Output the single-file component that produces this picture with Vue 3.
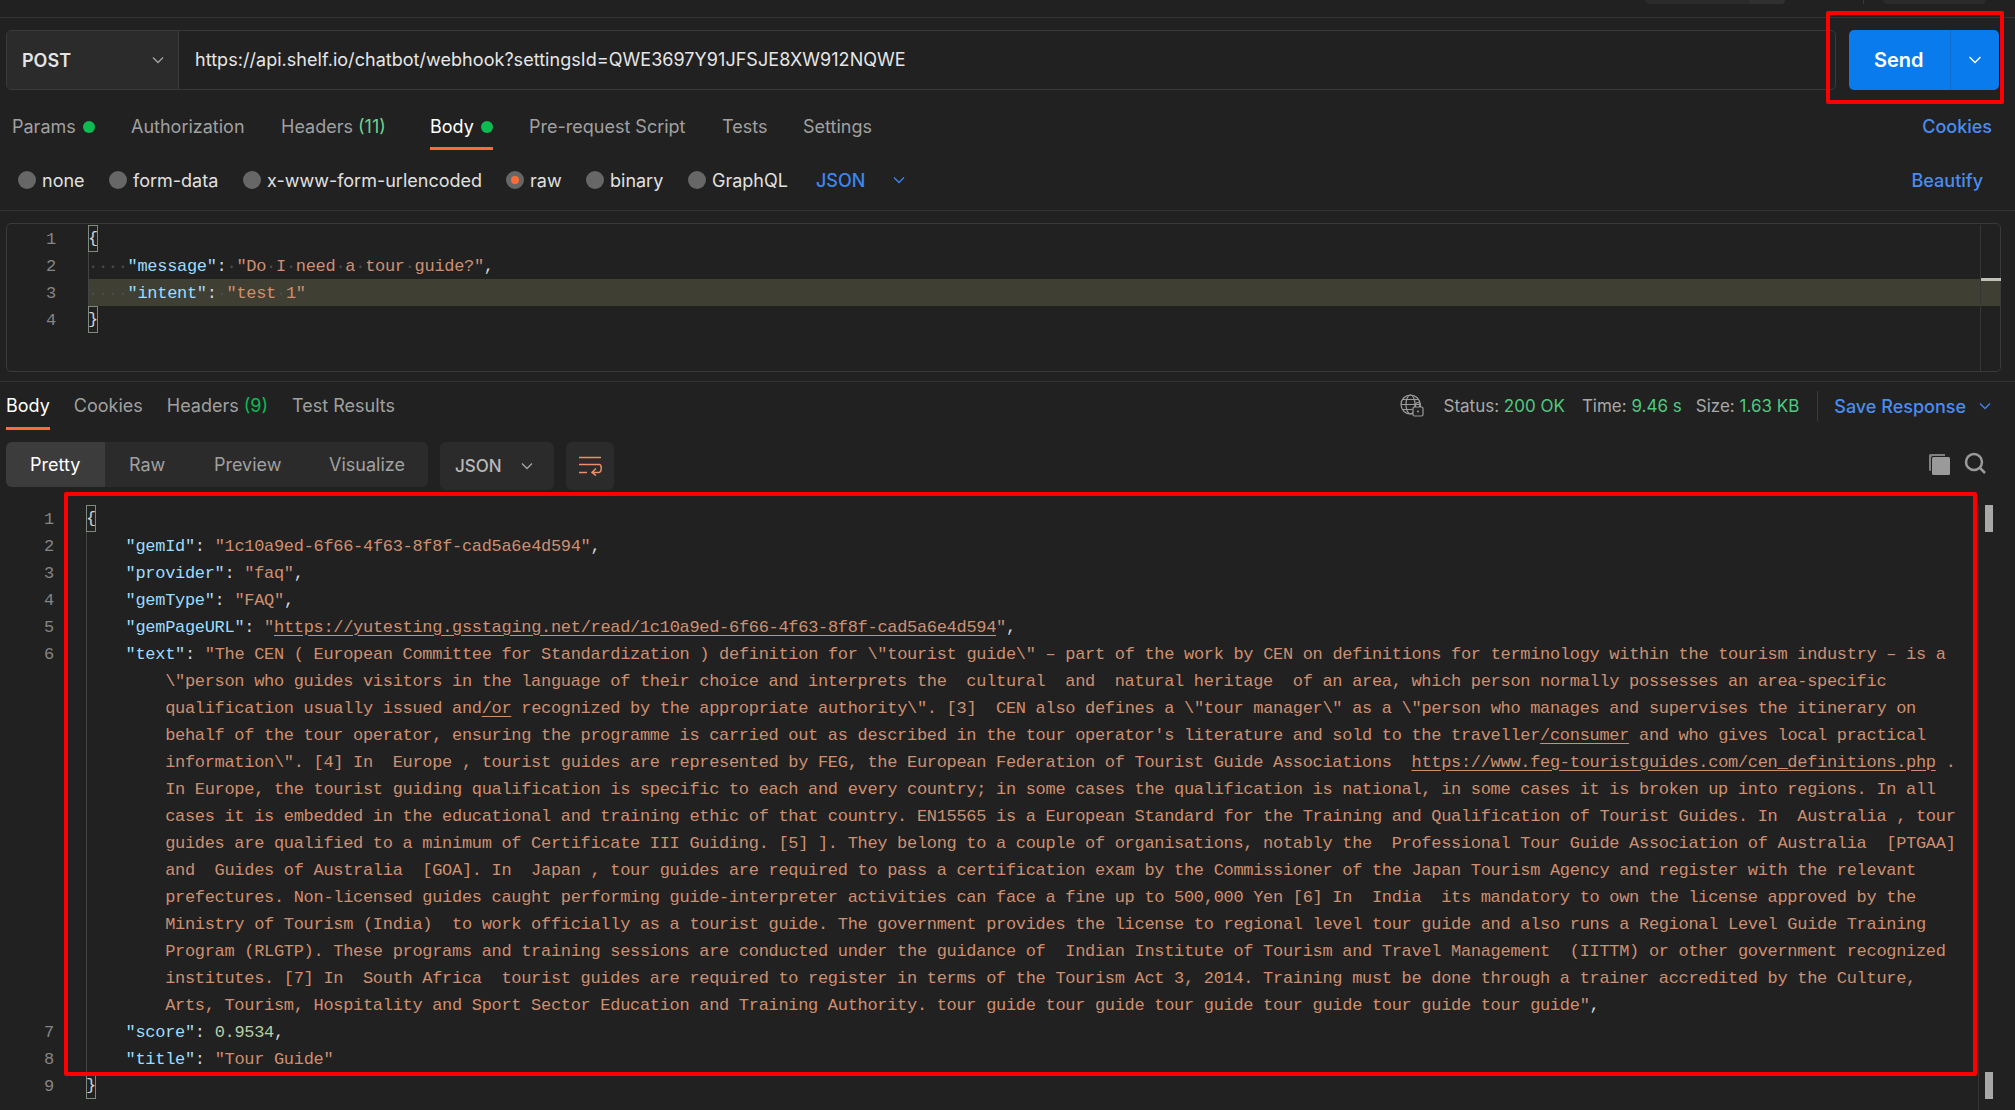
<script setup>
const reqTabs = [
  { label: 'Params', dot: true },
  { label: 'Authorization' },
  { label: 'Headers', count: '(11)' },
  { label: 'Body', dot: true, active: true },
  { label: 'Pre-request Script' },
  { label: 'Tests' },
  { label: 'Settings' }
]
const radios = [
  { label: 'none' },
  { label: 'form-data' },
  { label: 'x-www-form-urlencoded' },
  { label: 'raw', on: true },
  { label: 'binary' },
  { label: 'GraphQL' }
]
const request = [
  { n: 1, parts: [['{', 'br']] },
  { n: 2, parts: [['····', 'ws'], ['"message"', 'key'], [':', 'pn'], ['·', 'ws'], ['"Do', 'str'], ['·', 'ws'], ['I', 'str'], ['·', 'ws'], ['need', 'str'], ['·', 'ws'], ['a', 'str'], ['·', 'ws'], ['tour', 'str'], ['·', 'ws'], ['guide?"', 'str'], [',', 'pn']] },
  { n: 3, hl: true, parts: [['····', 'ws'], ['"intent"', 'key'], [':', 'pn'], ['·', 'ws'], ['"test', 'str'], ['·', 'ws'], ['1"', 'str']] },
  { n: 4, parts: [['}', 'br']] }
]
const s = 'str'
const response = [
  { n: 1, parts: [['{', 'br']] },
  { n: 2, parts: [['    ', 'pn'], ['"gemId"', 'key'], [': ', 'pn'], ['"1c10a9ed-6f66-4f63-8f8f-cad5a6e4d594"', s], [',', 'pn']] },
  { n: 3, parts: [['    ', 'pn'], ['"provider"', 'key'], [': ', 'pn'], ['"faq"', s], [',', 'pn']] },
  { n: 4, parts: [['    ', 'pn'], ['"gemType"', 'key'], [': ', 'pn'], ['"FAQ"', s], [',', 'pn']] },
  { n: 5, parts: [['    ', 'pn'], ['"gemPageURL"', 'key'], [': ', 'pn'], ['"', s], ['https://yutesting.gsstaging.net/read/1c10a9ed-6f66-4f63-8f8f-cad5a6e4d594', 'str link'], ['"', s], [',', 'pn']] },
  { n: 6, parts: [['    ', 'pn'], ['"text"', 'key'], [': ', 'pn'], ['"The CEN ( European Committee for Standardization ) definition for \\"tourist guide\\" – part of the work by CEN on definitions for terminology within the tourism industry – is a', s]] },
  { parts: [['        \\"person who guides visitors in the language of their choice and interprets the  cultural  and  natural heritage  of an area, which person normally possesses an area-specific', s]] },
  { parts: [['        qualification usually issued and', s], ['/or', 'str link'], [' recognized by the appropriate authority\\". [3]  CEN also defines a \\"tour manager\\" as a \\"person who manages and supervises the itinerary on', s]] },
  { parts: [["        behalf of the tour operator, ensuring the programme is carried out as described in the tour operator's literature and sold to the traveller", s], ['/consumer', 'str link'], [' and who gives local practical', s]] },
  { parts: [['        information\\". [4] In  Europe , tourist guides are represented by FEG, the European Federation of Tourist Guide Associations  ', s], ['https://www.feg-touristguides.com/cen_definitions.php', 'str link'], [' .', s]] },
  { parts: [['        In Europe, the tourist guiding qualification is specific to each and every country; in some cases the qualification is national, in some cases it is broken up into regions. In all', s]] },
  { parts: [['        cases it is embedded in the educational and training ethic of that country. EN15565 is a European Standard for the Training and Qualification of Tourist Guides. In  Australia , tour', s]] },
  { parts: [['        guides are qualified to a minimum of Certificate III Guiding. [5] ]. They belong to a couple of organisations, notably the  Professional Tour Guide Association of Australia  [PTGAA]', s]] },
  { parts: [['        and  Guides of Australia  [GOA]. In  Japan , tour guides are required to pass a certification exam by the Commissioner of the Japan Tourism Agency and register with the relevant', s]] },
  { parts: [['        prefectures. Non-licensed guides caught performing guide-interpreter activities can face a fine up to 500,000 Yen [6] In  India  its mandatory to own the license approved by the', s]] },
  { parts: [['        Ministry of Tourism (India)  to work officially as a tourist guide. The government provides the license to regional level tour guide and also runs a Regional Level Guide Training', s]] },
  { parts: [['        Program (RLGTP). These programs and training sessions are conducted under the guidance of  Indian Institute of Tourism and Travel Management  (IITTM) or other government recognized', s]] },
  { parts: [['        institutes. [7] In  South Africa  tourist guides are required to register in terms of the Tourism Act 3, 2014. Training must be done through a trainer accredited by the Culture,', s]] },
  { parts: [['        Arts, Tourism, Hospitality and Sport Sector Education and Training Authority. tour guide tour guide tour guide tour guide tour guide tour guide"', s], [',', 'pn']] },
  { n: 7, parts: [['    ', 'pn'], ['"score"', 'key'], [': ', 'pn'], ['0.9534', 'num'], [',', 'pn']] },
  { n: 8, parts: [['    ', 'pn'], ['"title"', 'key'], [': ', 'pn'], ['"Tour Guide"', s]] },
  { n: 9, parts: [['}', 'br']] }
]
</script>

<template>
  <div class="page">
    <header class="topstrip">
      <span class="sliver s1"><i></i></span>
      <span class="vbar"></span>
      <span class="sliver s2"></span>
    </header>

    <section class="reqbar">
      <div class="urlbox">
        <div class="method">
          <span>POST</span>
          <svg class="chev" viewBox="0 0 14 14"><path d="M2 4.5l5 5 5-5" /></svg>
        </div>
        <div class="url">https://api.shelf.io/chatbot/webhook?settingsId=QWE3697Y91JFSJE8XW912NQWE</div>
      </div>
      <div class="send">
        <span class="send-l">Send</span>
        <span class="send-r"><svg class="chev white" viewBox="0 0 14 14"><path d="M1.5 4l5.5 5.5L12.500 4" /></svg></span>
      </div>
    </section>

    <nav class="reqtabs">
      <div v-for="t in reqTabs" :key="t.label" class="tab" :class="{ active: t.active }">
        <span>{{ t.label }}</span>
        <span v-if="t.count" class="cnt">&nbsp;{{ t.count }}</span>
        <span v-if="t.dot" class="dot"></span>
      </div>
      <div class="spacer"></div>
      <a class="bluelink cookies">Cookies</a>
    </nav>

    <div class="radios">
      <label v-for="r in radios" :key="r.label" class="radio">
        <span class="circle" :class="{ on: r.on }"></span>{{ r.label }}
      </label>
      <span class="json-blue">JSON</span>
      <svg class="chev blue jsonchev" viewBox="0 0 14 14"><path d="M2 4.500l5 5 5-5" /></svg>
      <div class="spacer"></div>
      <a class="bluelink beautify">Beautify</a>
    </div>

    <section class="editor">
      <div v-for="l in request" :key="l.n" class="line" :class="{ hl: l.hl }">
        <span class="ln">{{ l.n }}</span>
        <span class="code"><span v-for="(p, i) in l.parts" :key="i" :class="p[1]">{{ p[0] }}</span></span>
      </div>
      <span class="guide ed-guide"></span>
      <span class="ed-rule"></span>
      <span class="ed-mark"></span>
    </section>

    <nav class="restabs">
      <div class="rtab active">Body</div>
      <div class="rtab">Cookies</div>
      <div class="rtab">Headers <span class="cnt2">(9)</span></div>
      <div class="rtab">Test Results</div>
      <div class="spacer"></div>
      <svg class="globe" viewBox="0 0 24 24">
        <circle cx="10.500" cy="10.500" r="9.500" />
        <ellipse cx="10.500" cy="10.500" rx="4.500" ry="9.500" />
        <path d="M1 10.500h19M2.500 5.500h16M2.500 15.500h10" />
        <rect class="lockbg" x="13" y="13" width="10" height="9" rx="1.500" />
        <path d="M15.500 13v-2a2.500 2.500 0 0 1 5 0v2" />
        <circle class="lockdot" cx="18" cy="17.500" r="1" />
      </svg>
      <span class="stat first">Status: <b>200 OK</b></span>
      <span class="stat time">Time: <b>9.46 s</b></span>
      <span class="stat size">Size: <b>1.63 KB</b></span>
      <span class="statbar"></span>
      <a class="bluelink save">Save Response</a>
      <svg class="chev blue savechev" viewBox="0 0 14 14"><path d="M2 4.500l5 5 5-5" /></svg>
    </nav>

    <div class="toolbar">
      <div class="segs">
        <span class="seg sel">Pretty</span>
        <span class="seg raw">Raw</span>
        <span class="seg prev">Preview</span>
        <span class="seg vis">Visualize</span>
      </div>
      <div class="fmt">
        <span>JSON</span>
        <svg class="chev" viewBox="0 0 14 14"><path d="M2 4.500l5 5 5-5" /></svg>
      </div>
      <div class="wrapbtn">
        <svg viewBox="0 0 24 20"><path d="M1 1.500h22M1 8.500h20.500c2.500 0 2.500 8-1 8H14M18 12.500l-4 4 4 3M1 16.500h8" /></svg>
      </div>
      <div class="spacer"></div>
      <svg class="copy" viewBox="0 0 22 22">
        <path class="c-back" d="M1 2.500Q1 1 2.500 1H17v2H5Q3 3 3 5v13H2.500Q1 18 1 16.500z" />
        <rect class="c-front" x="4" y="4" width="18" height="18" rx="1.500" />
      </svg>
      <svg class="search" viewBox="0 0 22 22">
        <circle cx="10" cy="10" r="8" />
        <path d="M16 16l5 5" />
      </svg>
    </div>

    <section class="response">
      <div v-for="(l, idx) in response" :key="idx" class="line">
        <span class="ln">{{ l.n }}</span>
        <span class="code"><span v-for="(p, i) in l.parts" :key="i" :class="p[1]">{{ p[0] }}</span></span>
      </div>
      <span class="guide res-guide"></span>
      <span class="res-rule"></span>
      <span class="thumb t1"></span>
      <span class="thumb t2"></span>
    </section>

    <div class="redbox rb1"></div>
    <div class="redbox rb2"></div>
  </div>
</template>

<style>
html, body { margin: 0; background: #212121; }
</style>

<style scoped>
.page {
  position: relative;
  width: 2015px;
  height: 1110px;
  overflow: hidden;
  background: #212121;
  color: #d8d8d8;
  font-family: Inter, "Liberation Sans", sans-serif;
  font-size: 18px;
}
.spacer { flex: 1; }
.topstrip {
  height: 17px;
  border-bottom: 1px solid #333;
  display: flex;
  align-items: flex-start;
  padding-left: 1645px;
}
.sliver { display: block; height: 4px; background: #2a2a2a; border-radius: 0 0 5px 5px; }
.s1 { width: 140px; position: relative; }
.s1 i { display: block; position: absolute; right: 0; width: 36px; height: 4px; background: #303030; border-radius: 0 0 5px 0; }
.vbar { width: 1px; height: 4px; background: #3a3a3a; margin: 0 19px 0 78px; }
.s2 { width: 103px; }

.reqbar {
  display: flex;
  margin: 12px 0 0 6px;
  height: 60px;
}
.urlbox {
  width: 1830px;
  box-sizing: border-box;
  display: flex;
  border: 1px solid #3a3a3a;
  border-radius: 5px;
  overflow: hidden;
}
.method {
  width: 172px;
  background: #2b2b2b;
  border-right: 1px solid #3a3a3a;
  display: flex;
  align-items: center;
  justify-content: space-between;
  padding: 0 13px 0 15px;
  box-sizing: border-box;
  font-weight: 600;
  color: #e4e4e4;
}
.url { padding-left: 16px; line-height: 58px; color: #e6e6e6; white-space: nowrap; letter-spacing: 0.040px; }
.chev { width: 14px; height: 14px; flex: none; }
.chev path { fill: none; stroke: #a6a6a6; stroke-width: 1.300; }
.chev.white path { stroke: #fff; }
.chev.blue path { stroke: #3d86ee; }
.send {
  margin-left: 13px;
  width: 150px;
  display: flex;
  background: #097bed;
  border-radius: 5px;
  color: #fff;
  font-weight: 600;
  font-size: 20px;
  align-items: stretch;
}
.send-l { width: 101px; box-sizing: border-box; padding-left: 25px; line-height: 60px; }
.send-r { flex: 1; border-left: 1px solid #0a6ccf; display: flex; align-items: center; justify-content: center; }

.reqtabs {
  display: grid;
  grid-template-columns: 119px 150px 149px 99px 193px 81px 100px 1fr auto;
  margin: 13px 23px 0 12px;
  height: 44px;
  align-items: start;
  line-height: 47px;
  padding: 0;
}
.tab { position: relative; height: 47px; display: flex; align-items: center; color: #a0a0a0; white-space: nowrap; }
.tab.active { color: #fff; }
.tab.active::after {
  content: "";
  position: absolute;
  left: 0;
  bottom: 0;
  width: 63px;
  height: 3px;
  background: #ff6c37;
}
.cnt { color: #6fd08f; }
.dot { width: 12px; height: 12px; border-radius: 50%; background: #0cbb52; margin-left: 7px; }
.bluelink { color: #4a8df0; font-weight: 500; white-space: nowrap; }

.radios {
  display: grid;
  grid-template-columns: 91px 134px 263px 80px 102px 128px 76px 30px 1fr auto;
  align-items: center;
  height: 60px;
  margin-top: 3px;
  padding: 0 32px 0 18px;
  border-bottom: 1px solid #333;
  box-sizing: content-box;
}
.radio { display: flex; align-items: center; gap: 6px; color: #e0e0e0; white-space: nowrap; }
.circle { width: 18px; height: 18px; border-radius: 50%; background: #676767; flex: none; box-sizing: border-box; }
.circle.on { background: #ff6c37; border: 5px solid #676767; }
.json-blue { color: #3d86ee; font-weight: 500; }
.jsonchev { justify-self: start; }

.editor {
  position: relative;
  margin: 12px 14px 0 6px;
  height: 149px;
  box-sizing: border-box;
  border: 1px solid #3a3a3a;
  border-radius: 5px;
  padding-top: 1px;
}
.line {
  display: flex;
  height: 27px;
  line-height: 29px;
  font-family: "Liberation Mono", "DejaVu Sans Mono", monospace;
  font-size: 17px;
  letter-spacing: -0.310px;
  white-space: pre;
}
.ln { color: #858585; text-align: right; flex: none; }
.editor .ln { width: 49px; }
.editor .code { margin-left: 32px; }
.editor .line.hl { background: linear-gradient(90deg, transparent 81px, #3f3f33 81px); }
.key { color: #9cdcfe; }
.str { color: #ce8f70; }
.num { color: #b5cea8; }
.pn { color: #d4d4d4; }
.ws { color: #4c4c4c; }
.br { color: #d4d4d4; outline: 1px solid #7d8a7d; outline-offset: -1px; display: inline-block; line-height: 27px; height: 27px; vertical-align: top; }
.link { text-decoration: underline; text-underline-offset: 3px; }
.guide { position: absolute; width: 1px; background: #444; }
.ed-guide { left: 81px; top: 28px; height: 54px; }
.ed-rule { position: absolute; left: 1973px; top: 1px; bottom: 0; width: 1px; background: #363636; }
.ed-mark { position: absolute; left: 1974px; top: 54px; width: 20px; height: 3px; background: #c0c0b8; }

.restabs {
  display: flex;
  align-items: center;
  height: 48px;
  margin-top: 9px;
  padding: 0 23px 0 6px;
  border-top: 1px solid #333;
  white-space: nowrap;
}
.rtab { position: relative; height: 48px; line-height: 48px; color: #a0a0a0; margin-right: 24px; }
.rtab.active { color: #fff; }
.rtab.active::after { content: ""; position: absolute; left: 0; right: 0; bottom: 0; height: 3px; background: #ff6c37; }
.cnt2 { color: #0cbb52; }
.globe { width: 24px; height: 24px; flex: none; }
.globe circle, .globe ellipse, .globe path, .globe rect { fill: none; stroke: #9b9b9b; stroke-width: 1.200; }
.globe .lockbg { fill: #212121; }
.globe .lockdot { fill: #9b9b9b; stroke: none; }
.stat { color: #a8a8a8; font-size: 17px; }
.stat b { font-weight: 400; color: #4fc97f; }
.first { margin-left: 19px; }
.time { margin-left: 17px; }
.size { margin-left: 14px; }
.statbar { width: 1px; height: 30px; background: #3a3a3a; margin: 0 16px 0 18px; }
.savechev { margin-left: 12px; }

.toolbar {
  display: flex;
  align-items: flex-start;
  margin-top: 12px;
  height: 48px;
  padding: 0 29px 0 6px;
}
.segs {
  display: grid;
  grid-template-columns: 99px 85px 115px 123px;
  width: 422px;
  height: 45px;
  border-radius: 6px;
  overflow: hidden;
  background: #2b2b2b;
  color: #a0a0a0;
  line-height: 46px;
  flex: none;
}
.seg { white-space: nowrap; padding-left: 24px; }
.seg.sel { background: #3c3c3c; color: #fff; }
.fmt {
  width: 114px;
  height: 48px;
  box-sizing: border-box;
  margin-left: 12px;
  background: #2b2b2b;
  border-radius: 6px;
  display: flex;
  align-items: center;
  justify-content: space-between;
  padding: 0 20px 0 15px;
  font-weight: 500;
  font-size: 17px;
  color: #b8b8b8;
}
.wrapbtn {
  width: 48px;
  height: 48px;
  margin-left: 12px;
  background: #2b2b2b;
  border-radius: 6px;
  display: flex;
  align-items: center;
  justify-content: center;
}
.wrapbtn svg { width: 24px; height: 20px; }
.wrapbtn path { fill: none; stroke: #f08d68; stroke-width: 1.500; }
.copy { width: 22px; height: 22px; margin-top: 11px; }
.c-back { fill: #808080; }
.c-front { fill: #9a9a9a; }
.search { width: 22px; height: 22px; margin: 10px 0 0 14px; }
.search circle, .search path { fill: none; stroke: #9a9a9a; stroke-width: 2.500; }

.response {
  position: relative;
  margin-top: 15px;
  height: 605px;
}
.response .ln { width: 54px; }
.response .code { margin-left: 32px; }
.res-guide { left: 86px; top: 27px; height: 541px; }
.res-rule { position: absolute; left: 1978px; top: 0; bottom: 0; width: 1px; background: #333; }
.thumb { position: absolute; left: 1985px; width: 8px; height: 27px; background: #a8a8a8; }
.t1 { top: 0; }
.t2 { top: 567px; }

.redbox {
  position: absolute;
  box-sizing: border-box;
  border: 4px solid #f00;
  border-radius: 2px;
  pointer-events: none;
}
.rb1 { left: 1826px; top: 11px; width: 178px; height: 93px; }
.rb2 { left: 64px; top: 492px; width: 1913px; height: 584px; }
</style>
